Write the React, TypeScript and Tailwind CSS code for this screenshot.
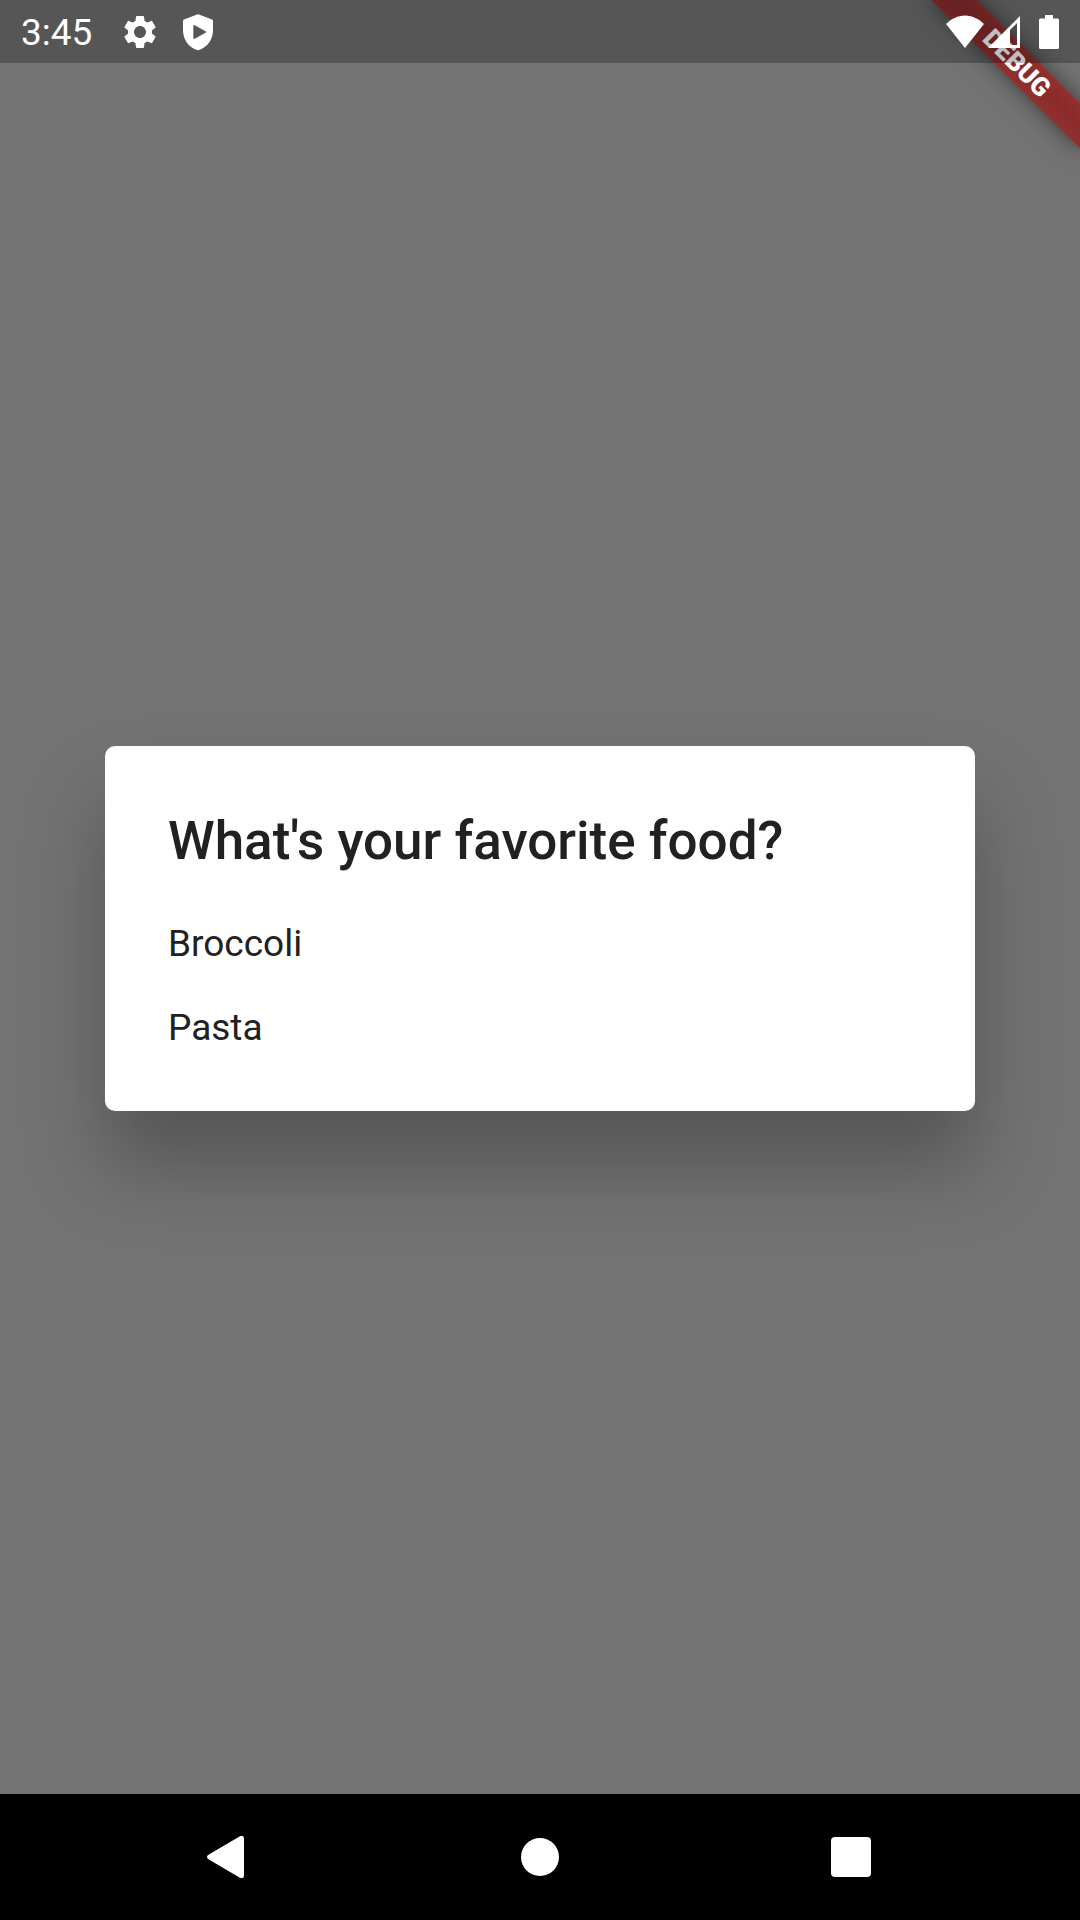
import React from "react";

const options = ["Broccoli", "Pasta"];

function GearIcon() {
  return (
    <svg viewBox="0 0 24 24" className="size-10" fill="currentColor" aria-hidden="true">
      <path d="M19.14 12.94c.04-.3.06-.61.06-.94 0-.32-.02-.64-.07-.94l2.03-1.58c.18-.14.23-.41.12-.61l-1.92-3.32c-.12-.22-.37-.29-.59-.22l-2.39.96c-.5-.38-1.03-.7-1.62-.94l-.36-2.54c-.04-.24-.24-.41-.48-.41h-3.84c-.24 0-.43.17-.47.41l-.36 2.54c-.59.24-1.13.57-1.62.94l-2.39-.96c-.22-.08-.47 0-.59.22L2.74 8.87c-.12.21-.08.47.12.61l2.03 1.58c-.05.3-.09.63-.09.94s.02.64.07.94l-2.03 1.58c-.18.14-.23.41-.12.61l1.92 3.32c.12.22.37.29.59.22l2.39-.96c.5.38 1.03.7 1.62.94l.36 2.54c.05.24.24.41.48.41h3.84c.24 0 .44-.17.47-.41l.36-2.54c.59-.24 1.13-.56 1.62-.94l2.39.96c.22.08.47 0 .59-.22l1.92-3.32c.12-.22.07-.47-.12-.61l-2.01-1.58zM12 15.6c-1.98 0-3.6-1.62-3.6-3.6s1.62-3.6 3.6-3.6 3.6 1.62 3.6 3.6-1.62 3.6-3.6 3.6z" />
    </svg>
  );
}

function ShieldPlayIcon() {
  return (
    <svg viewBox="0 0 40 40" className="size-10" fill="currentColor" aria-hidden="true">
      <path
        fillRule="evenodd"
        d="M19 2.5Q20 2 21 2.5L34 7.4Q35 7.8 35 8.9V18C35 27.5 29.5 35.4 21 38Q20 38.3 19 38C10.500 35.4 5 27.500 5 18V8.900Q5 7.800 6 7.400ZM15.300 14.200V25.800Q15.300 27.500 16.800 26.700L27.500 20.800Q28.900 20 27.500 19.200L16.800 13.300Q15.300 12.500 15.300 14.200Z"
      />
    </svg>
  );
}

function WifiIcon() {
  return (
    <svg viewBox="0 0 38 34" className="h-[34px] w-[38px]" fill="currentColor" aria-hidden="true">
      <path d="M19 33 0 9C5 4 12 .5 19 .5S33 4 38 9Z" />
    </svg>
  );
}

function SignalIcon() {
  return (
    <svg viewBox="0 0 32 34" className="h-[34px] w-8" fill="currentColor" aria-hidden="true">
      <path fillRule="evenodd" d="M0 33 32 1V33ZM22 15V30H29V8Z" />
    </svg>
  );
}

function BatteryIcon() {
  return (
    <svg viewBox="0 0 20 34" className="h-[34px] w-5" fill="currentColor" aria-hidden="true">
      <path d="M6 0H14V3.500H18.500Q20 3.500 20 5V32.500Q20 34 18.500 34H1.500Q0 34 0 32.500V5Q0 3.500 1.500 3.500H6Z" />
    </svg>
  );
}

function StatusBar() {
  return (
    <header className="relative z-10 flex h-[63px] items-center justify-between bg-black/25 px-[21px] text-white">
      <div className="flex items-center">
        <time className="mr-7 pt-[2px] text-[37px] leading-[61px]">3:45</time>
        <div className="flex items-center gap-[18px]">
          <GearIcon />
          <ShieldPlayIcon />
        </div>
      </div>
      <div className="flex items-center">
        <WifiIcon />
        <div className="ml-1 mr-[19px]">
          <SignalIcon />
        </div>
        <BatteryIcon />
      </div>
    </header>
  );
}

function DebugBanner() {
  return (
    <div className="pointer-events-none absolute right-0 top-0 size-[240px] overflow-hidden">
      <div className="absolute -right-[42px] top-[47px] flex h-8 w-[210px] rotate-45 items-center justify-center bg-linear-to-b from-[#923030] via-[#8a2a2a] to-[#923030] shadow-[0_0_21px_rgba(0,0,0,0.5)]">
        <span className="text-[26px] font-black leading-none text-white">DEBUG</span>
      </div>
    </div>
  );
}

function FoodDialog() {
  return (
    <section
      role="dialog"
      aria-modal="true"
      aria-labelledby="food-title"
      className="w-full rounded-[10px] bg-white pb-[41px] pt-16 text-[#212121] shadow-[0_55px_80px_rgba(0,0,0,0.26)]"
    >
      <h1 id="food-title" className="px-[63px] text-[53px] font-medium leading-[62px]">
        What's your favorite food?
      </h1>
      <div className="mt-[30px] flex flex-col">
        {options.map((option) => (
          <button key={option} type="button" className="px-[63px] py-[21px] text-left text-[37px] leading-[42px]">
            {option}
          </button>
        ))}
      </div>
    </section>
  );
}

function NavigationBar() {
  return (
    <nav className="relative grid h-[126px] grid-cols-3 bg-black px-[73px] text-white">
      <button type="button" aria-label="Back" className="flex items-center justify-center">
        <svg viewBox="0 0 44 44" className="size-11" fill="currentColor" aria-hidden="true">
          <path d="M1 20 32.500 1.500Q37 -.5 37 3.500V40.500Q37 44.500 32.500 42.500L1 24Q-1 22 1 20Z" />
        </svg>
      </button>
      <button type="button" aria-label="Home" className="flex items-center justify-center">
        <span className="size-[38px] rounded-full bg-white" />
      </button>
      <button type="button" aria-label="Recent apps" className="flex items-center justify-center">
        <span className="size-10 rounded bg-white" />
      </button>
    </nav>
  );
}

export default function App() {
  return (
    <div className="relative flex min-h-screen flex-col overflow-hidden bg-[#737373] font-['Roboto',sans-serif]">
      <DebugBanner />
      <StatusBar />
      <main className="flex grow items-center px-[105px]">
        <FoodDialog />
      </main>
      <NavigationBar />
    </div>
  );
}
